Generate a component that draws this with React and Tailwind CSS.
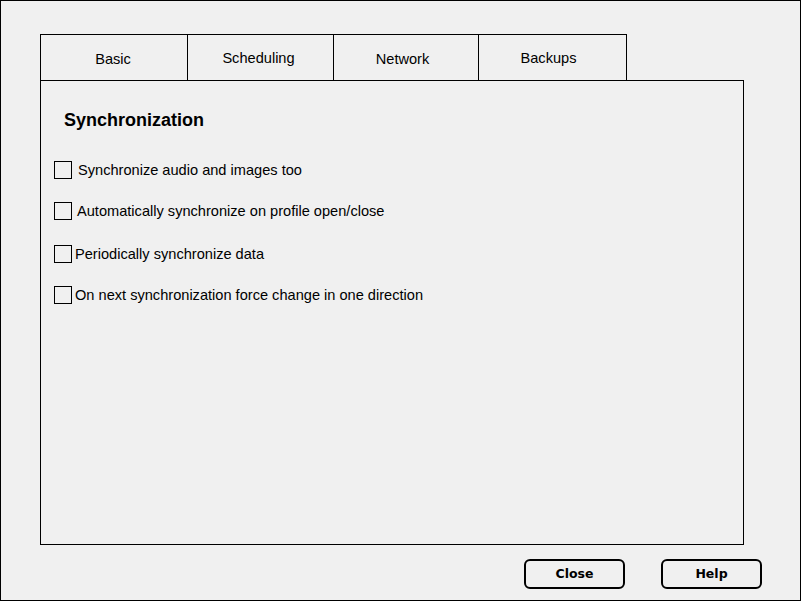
const tabs = [
  { label: 'Basic', w: 'w-[147px]', extra: 'pt-[4px] pr-[2px]' },
  { label: 'Scheduling', w: 'w-[146px]', extra: 'pt-[2px] pr-[4px]' },
  { label: 'Network', w: 'w-[145px]', extra: 'pt-[4px] pr-[7px]' },
  { label: 'Backups', w: 'w-[149px] border-r', extra: 'pt-[2px] pr-[8px]' },
];

const options = [
  { label: 'Synchronize audio and images too', gap: 'ml-[6px]', mt: 'mt-[30px]' },
  { label: 'Automatically synchronize on profile open/close', gap: 'ml-[5px]', mt: 'mt-[23px]' },
  { label: 'Periodically synchronize data', gap: 'ml-[3px]', mt: 'mt-[25px]' },
  { label: 'On next synchronization force change in one direction', gap: 'ml-[3px]', mt: 'mt-[23px]' },
];

function Checkbox() {
  return <span className="block w-[18px] h-[18px] border border-black bg-[#f0f0f0] shrink-0" />;
}

export default function App() {
  return (
    <div
      className="w-[801px] h-[601px] border border-black bg-[#f0f0f0] flex flex-col pl-[39px] pt-[33px] text-black"
      style={{ fontFamily: '"Liberation Sans", Arial, sans-serif' }}
    >
      {/* Tabs */}
      <div className="flex h-[46px]">
        {tabs.map((t) => (
          <div
            key={t.label}
            className={`${t.w} ${t.extra} h-full border-l border-t border-black flex items-center justify-center text-[14.6px]`}
          >
            {t.label}
          </div>
        ))}
      </div>

      {/* Panel */}
      <div className="w-[704px] h-[465px] border border-black pl-[13px] flex flex-col">
        <h2 className="mt-[28px] ml-[10px] text-[18px] font-bold leading-[22px]">Synchronization</h2>
        {options.map((o) => (
          <label key={o.label} className={`${o.mt} flex items-center h-[18px] text-[14.6px]`}>
            <Checkbox />
            <span className={`${o.gap} pt-[2px]`}>{o.label}</span>
          </label>
        ))}
      </div>

      {/* Buttons */}
      <div className="flex justify-end gap-[36px] pr-[38px] mt-[14px]">
        {['Close', 'Help'].map((b) => (
          <button
            key={b}
            className="w-[101px] h-[30px] border-2 border-black rounded-[6px] text-[12.5px] font-bold flex items-center justify-center pt-[1px]"
            style={{ fontFamily: '"DejaVu Sans", sans-serif' }}
          >
            {b}
          </button>
        ))}
      </div>
    </div>
  );
}
